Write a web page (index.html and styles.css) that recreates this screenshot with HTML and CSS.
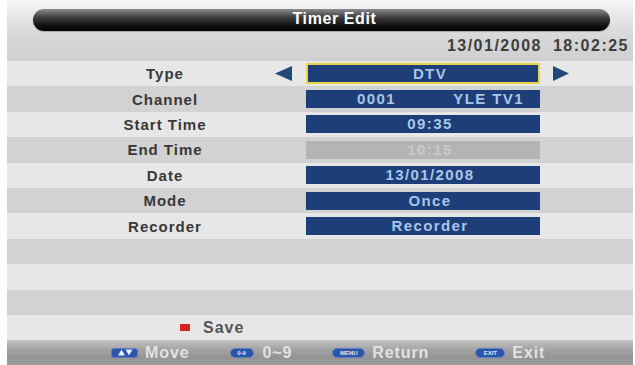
FILE: index.html
```html
<!DOCTYPE html>
<html>
<head>
<meta charset="utf-8">
<link rel="stylesheet" href="styles.css">
</head>
<body>
<div class="screen">
  <div class="top">
    <div class="titlebar">Timer Edit</div>
    <div class="clock"><span>13/01/2008</span><span>18:02:25</span></div>
  </div>
  <div class="rows">
    <div class="row light">
      <div class="label">Type</div>
      <div class="arrow-cell left"><svg width="17" height="15" viewBox="0 0 17 15"><polygon points="0,7.5 17,0 17,15" fill="#1f4a78"/></svg></div>
      <div class="value focus"><span>DTV</span></div>
      <div class="arrow-cell right"><svg width="16" height="15" viewBox="0 0 16 15"><polygon points="16,7.5 0,0 0,15" fill="#1f4a78"/></svg></div>
    </div>
    <div class="row dark">
      <div class="label">Channel</div>
      <div class="arrow-cell"></div>
      <div class="value split"><span>0001</span><span>YLE TV1</span></div>
    </div>
    <div class="row light">
      <div class="label">Start Time</div>
      <div class="arrow-cell"></div>
      <div class="value"><span>09:35</span></div>
    </div>
    <div class="row dark">
      <div class="label">End Time</div>
      <div class="arrow-cell"></div>
      <div class="value disabled"><span>10:15</span></div>
    </div>
    <div class="row light">
      <div class="label">Date</div>
      <div class="arrow-cell"></div>
      <div class="value"><span>13/01/2008</span></div>
    </div>
    <div class="row dark">
      <div class="label">Mode</div>
      <div class="arrow-cell"></div>
      <div class="value"><span>Once</span></div>
    </div>
    <div class="row light">
      <div class="label">Recorder</div>
      <div class="arrow-cell"></div>
      <div class="value"><span>Recorder</span></div>
    </div>
    <div class="row dark"></div>
    <div class="row light"></div>
    <div class="row dark"></div>
    <div class="row light save-row">
      <span class="red-key"></span><span class="save-text">Save</span>
    </div>
  </div>
  <div class="footer">
    <div class="hint"><span class="badge arrows"><svg width="16" height="7" viewBox="0 0 16 7"><polygon points="1,6.5 4.5,0.5 8,6.5" fill="#e8eefa"/><polygon points="8.5,0.5 15.5,0.5 12,6.5" fill="#e8eefa"/></svg></span><span class="htext">Move</span></div>
    <div class="hint num"><span class="badge small">0-9</span><span class="htext">0~9</span></div>
    <div class="hint"><span class="badge wide">MENU</span><span class="htext">Return</span></div>
    <div class="hint last"><span class="badge mid">EXIT</span><span class="htext">Exit</span></div>
  </div>
</div>
</body>
</html>
```
FILE: styles.css
```css
html, body {
  margin: 0;
  padding: 0;
  background: #ffffff;
}
body {
  font-family: "Liberation Sans", Arial, sans-serif;
}
.screen {
  margin-left: 7px;
  width: 626px;
  height: 365px;
  display: flex;
  flex-direction: column;
  overflow: hidden;
}
.top {
  height: 61px;
  flex: none;
  background: linear-gradient(#f6f6f6 0px, #e2e2e2 22px, #d6d6d6 40px, #d0d0d0 61px);
  padding-top: 9px;
  box-sizing: border-box;
  display: flex;
  flex-direction: column;
}
.titlebar {
  margin: 0 23px 0 26px;
  padding-left: 26px;
  height: 22px;
  border-radius: 11px;
  background: linear-gradient(#8a8a8a 0%, #3a3a3a 40%, #111 75%, #000 100%);
  color: #ffffff;
  font-weight: bold;
  font-size: 16px;
  letter-spacing: 0.6px;
  line-height: 20px;
  text-align: center;
  box-shadow: 0 1px 1px rgba(0,0,0,0.25);
}
.clock {
  flex: 1;
  display: flex;
  justify-content: flex-end;
  align-items: center;
  gap: 11px;
  padding-right: 4px;
  color: #3e3e3e;
  font-weight: bold;
  font-size: 16px;
  letter-spacing: 1.5px;
}
.rows {
  display: flex;
  flex-direction: column;
}
.row {
  height: 25.4px;
  flex: none;
  display: flex;
  align-items: center;
  padding-left: 50px;
}
.row.light { background: #e7e7e7; }
.row.dark { background: #d2d2d2; }
.label {
  width: 216px;
  text-align: center;
  font-weight: bold;
  font-size: 15px;
  letter-spacing: 1px;
  color: #383838;
}
.arrow-cell {
  width: 33px;
  display: flex;
  align-items: center;
}
.arrow-cell.left { padding-left: 2px; box-sizing: border-box; }
.arrow-cell.right { padding-left: 13px; }
.value {
  width: 234px;
  height: 18px;
  box-sizing: border-box;
  padding-left: 14px;
  background: #1d3e78;
  color: #a9c6e8;
  font-weight: bold;
  font-size: 15px;
  letter-spacing: 1.4px;
  display: flex;
  align-items: center;
  justify-content: center;
  line-height: 18px;
}
.value.focus {
  height: 21px;
  border: 2px solid #e4d54c;
  box-shadow: 0 0 1px #f3eaa0;
}
.value.split {
  justify-content: space-between;
  padding: 0 16px 0 51px;
}
.value.disabled {
  background: #b4b4b4;
  color: #cacaca;
}
.save-row {
  padding-left: 173px;
}
.red-key {
  width: 10px;
  height: 7px;
  background: #d72222;
  margin-right: 13px;
}
.save-text {
  font-weight: bold;
  font-size: 16px;
  letter-spacing: 1px;
  color: #555555;
}
.footer {
  flex: 1;
  background: linear-gradient(#c4c4c4 0%, #a5a5a5 35%, #949494 70%, #9c9c9c 100%);
  display: flex;
  align-items: center;
  padding-left: 104px;
  gap: 40px;
}
.hint {
  display: flex;
  align-items: center;
  gap: 7px;
}
.hint.num { gap: 9px; }
.hint.last { margin-left: 6px; }
.htext {
  color: #e2e2e2;
  font-weight: bold;
  font-size: 16px;
  letter-spacing: 0.9px;
}
.badge {
  height: 10px;
  border-radius: 5px;
  background: #2a55a8;
  border: 1px solid #5b7fc6;
  color: #dfe8fa;
  font-size: 6px;
  font-weight: bold;
  display: flex;
  align-items: center;
  justify-content: center;
  box-sizing: border-box;
}
.badge.arrows { width: 27px; border-radius: 3px; }
.badge.small { width: 24px; }
.badge.wide { width: 33px; }
.badge.mid { width: 30px; }
```
